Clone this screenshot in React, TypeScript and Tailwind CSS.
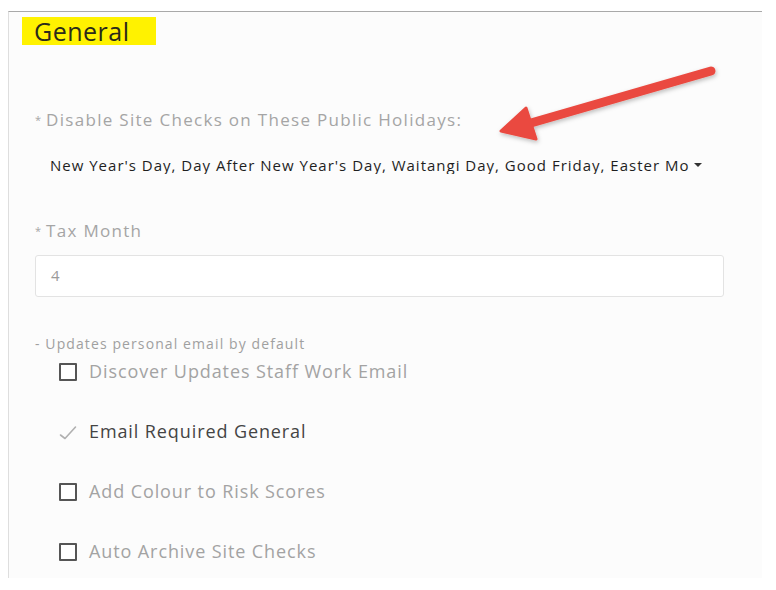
import React from "react";

const font = { fontFamily: '"Open Sans", "Noto Sans", sans-serif' };

function Box() {
  return <span className="block w-[18px] h-[18px] border-2 border-[#555] rounded-[1px] bg-white shrink-0" />;
}

function Check() {
  return (
    <svg width="18" height="18" viewBox="0 0 18 18" className="shrink-0">
      <path d="M1.5 12 L6 15.5 L16.5 4" fill="none" stroke="#b0b0b0" strokeWidth="1.6" strokeLinecap="round" strokeLinejoin="round" />
    </svg>
  );
}

function Row({ checked, label }: { checked?: boolean; label: string }) {
  return (
    <div className="flex items-center h-[60px] pl-[50px] gap-[12px]">
      {checked ? <Check /> : <Box />}
      <span className={`text-[18px] tracking-[0.9px] ${checked ? "text-[#444]" : "text-[#a3a3a3]"}`}>{label}</span>
    </div>
  );
}

export default function App() {
  return (
    <div className="w-[776px] h-[590px] bg-white pt-[11px] pl-[8px]" style={font}>
      <div className="relative w-[754px] h-[567px] border-t border-l border-t-[#a9a9a9] border-l-[#dedede] bg-[#fcfcfc]">
        <div className="pt-[5px] pl-[13px]">
          <div className="inline-flex items-center h-[28px] w-[134px] bg-[#fff200] pl-[12px]">
            <span className="text-[25px] tracking-[0.5px] leading-none text-[#2a2a1a]">General</span>
          </div>
        </div>

        <div className="pl-[26px] pt-[63px]">
          <div className="text-[17px] text-[#a5a5a5] tracking-[1.3px] leading-[20px]">
            <span className="text-[11px] align-top mr-[5px] tracking-normal">*</span>Disable Site Checks on These Public Holidays:
          </div>
          <div className="mt-[26px] pl-[15px] flex items-center w-[690px] text-[15px] font-medium tracking-[1px] text-[#1f1f1f] leading-[18px]">
            <span className="whitespace-nowrap overflow-hidden">New Year's Day, Day After New Year's Day, Waitangi Day, Good Friday, Easter Mo</span>
            <span className="ml-[5px] shrink-0 w-0 h-0 border-l-[4px] border-r-[4px] border-t-[4px] border-l-transparent border-r-transparent border-t-[#333]" />
          </div>

          <div className="mt-[47px] text-[17px] text-[#a5a5a5] tracking-[1.3px] leading-[20px]">
            <span className="text-[11px] align-top mr-[5px] tracking-normal">*</span>Tax Month
          </div>
          <div className="mt-[14px] w-[689px] h-[42px] border border-[#e3e3e3] rounded-[3px] bg-white flex items-center pl-[15px] text-[15px] text-[#9a9a9a]">
            4
          </div>

          <div className="mt-[39px] text-[14px] tracking-[1.1px] text-[#a0a0a0] leading-[16px]">- Updates personal email by default</div>
        </div>

        <div className="-mt-[10px]">
          <Row label="Discover Updates Staff Work Email" />
          <Row checked label="Email Required General" />
          <Row label="Add Colour to Risk Scores" />
          <Row label="Auto Archive Site Checks" />
        </div>

        <svg className="absolute left-0 top-0 pointer-events-none" width="754" height="200">
          <defs>
            <filter id="sh" x="-10%" y="-50%" width="120%" height="200%">
              <feDropShadow dx="1" dy="2" stdDeviation="2" floodColor="#000" floodOpacity="0.25" />
            </filter>
          </defs>
          <g filter="url(#sh)">
            <line x1="702" y1="59" x2="515" y2="113" stroke="#ea4a40" strokeWidth="9" strokeLinecap="round" />
            <path d="M492 119 L517 96 L527 127 Z" fill="#ea4a40" stroke="#ea4a40" strokeWidth="3" strokeLinejoin="round" />
          </g>
        </svg>
      </div>
    </div>
  );
}
